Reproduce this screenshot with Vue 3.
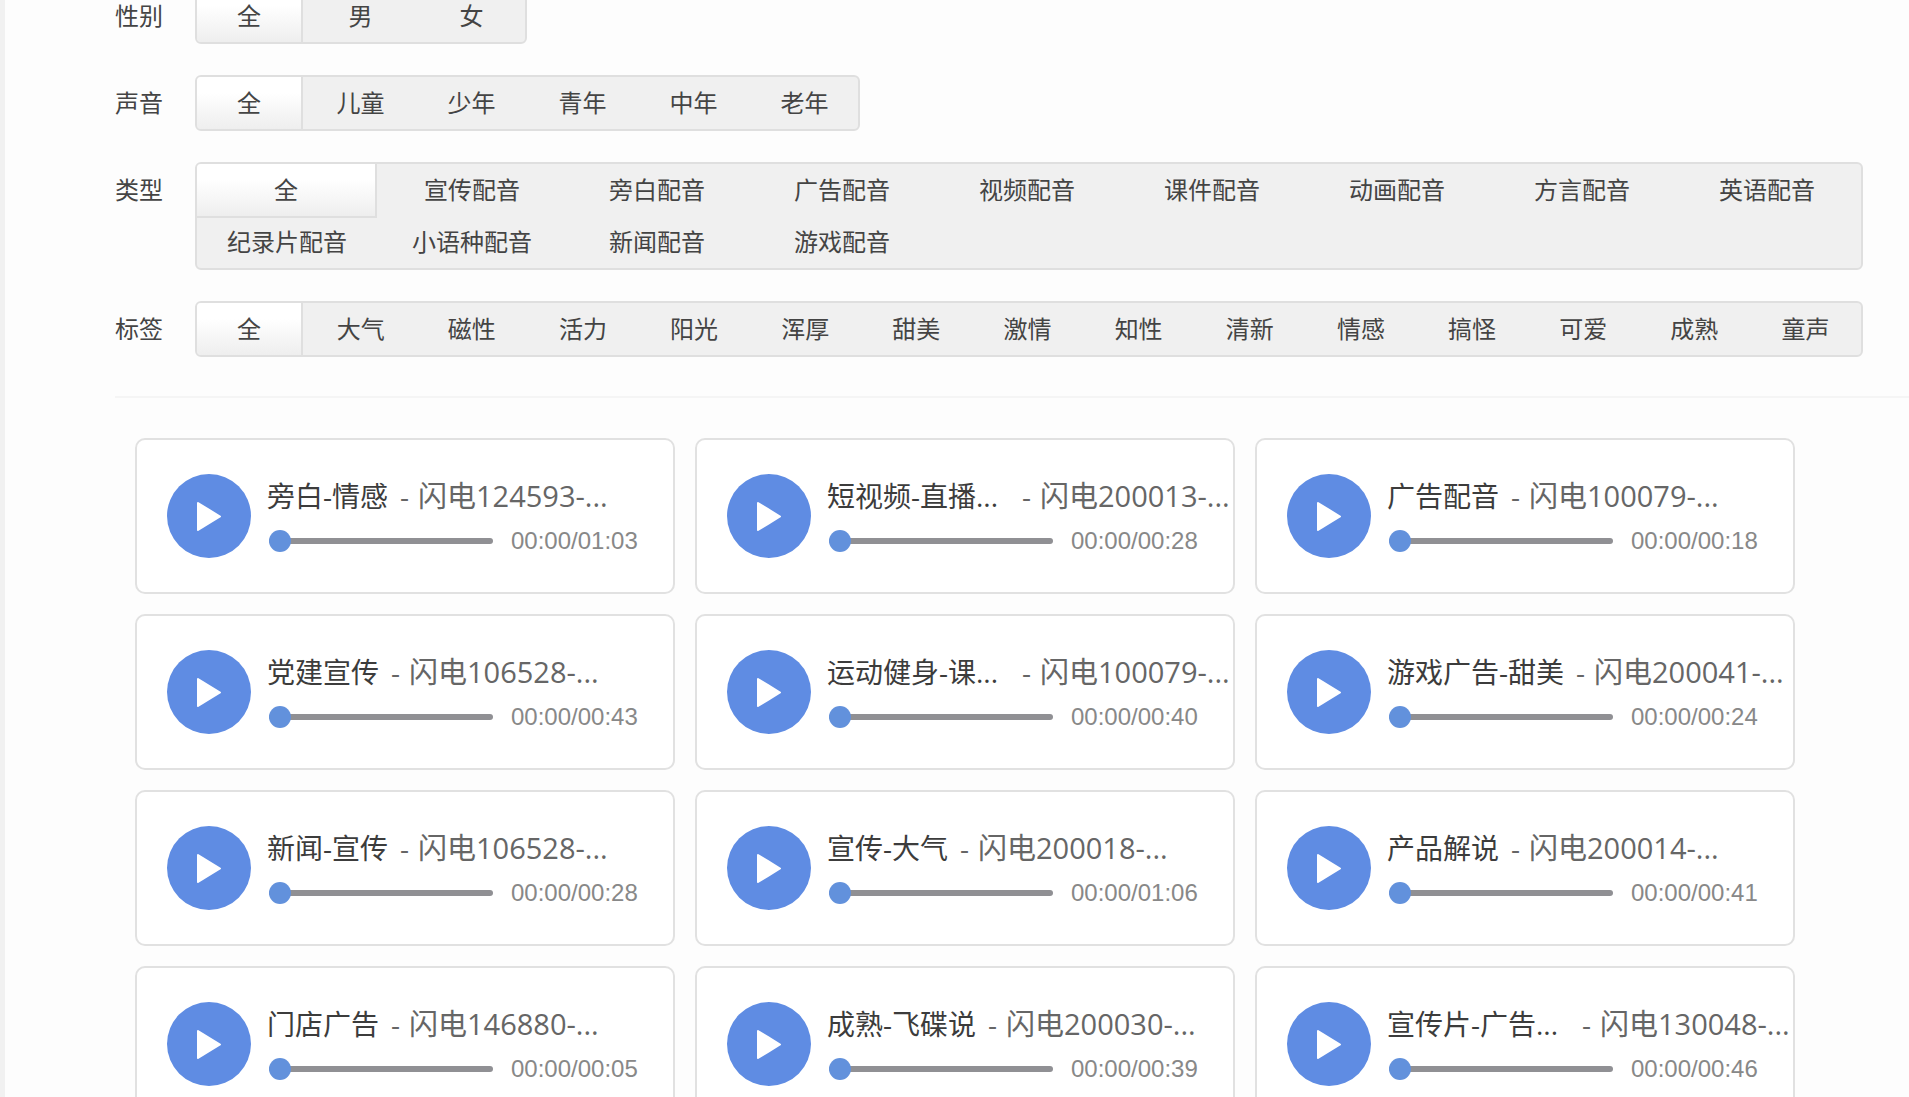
<script setup>
import { ref } from 'vue'

const filters = ref([
  { label: '性别', active: 0, options: ['全', '男', '女'] },
  { label: '声音', active: 0, options: ['全', '儿童', '少年', '青年', '中年', '老年'] },
  {
    label: '类型',
    active: 0,
    layout: 'wide',
    options: [
      '全', '宣传配音', '旁白配音', '广告配音', '视频配音', '课件配音', '动画配音',
      '方言配音', '英语配音', '纪录片配音', '小语种配音', '新闻配音', '游戏配音',
    ],
  },
  {
    label: '标签',
    active: 0,
    layout: 'full',
    options: [
      '全', '大气', '磁性', '活力', '阳光', '浑厚', '甜美', '激情',
      '知性', '清新', '情感', '搞怪', '可爱', '成熟', '童声',
    ],
  },
])

const samples = [
  { title: '旁白-情感', voice: '闪电124593-...', length: '01:03' },
  { title: '短视频-直播...', voice: '闪电200013-...', length: '00:28', clipped: true },
  { title: '广告配音', voice: '闪电100079-...', length: '00:18' },
  { title: '党建宣传', voice: '闪电106528-...', length: '00:43' },
  { title: '运动健身-课...', voice: '闪电100079-...', length: '00:40', clipped: true },
  { title: '游戏广告-甜美', voice: '闪电200041-...', length: '00:24' },
  { title: '新闻-宣传', voice: '闪电106528-...', length: '00:28' },
  { title: '宣传-大气', voice: '闪电200018-...', length: '01:06' },
  { title: '产品解说', voice: '闪电200014-...', length: '00:41' },
  { title: '门店广告', voice: '闪电146880-...', length: '00:05' },
  { title: '成熟-飞碟说', voice: '闪电200030-...', length: '00:39' },
  { title: '宣传片-广告...', voice: '闪电130048-...', length: '00:46', clipped: true },
]
</script>

<template>
  <main class="page">
    <section class="filters">
      <div v-for="(group, g) in filters" :key="group.label" class="filter">
        <span :id="'filter-' + g" class="filter-label">{{ group.label }}</span>
        <div class="options" :class="group.layout" role="group" :aria-labelledby="'filter-' + g">
          <button
            v-for="(option, i) in group.options"
            :key="option"
            type="button"
            class="option"
            :class="{ selected: group.active === i }"
            :aria-pressed="group.active === i"
            @click="group.active = i"
          >{{ option }}</button>
        </div>
      </div>
    </section>

    <section class="samples">
      <article v-for="(s, i) in samples" :key="i" class="card">
        <button type="button" class="play" :aria-label="'播放 ' + s.title">
          <svg viewBox="0 0 84 84" width="84" height="84" aria-hidden="true">
            <path d="M31 29 L53 42.500 L31 56 Z" fill="#fff" stroke="#fff" stroke-width="2" stroke-linejoin="round" />
          </svg>
        </button>
        <div class="info">
          <div class="heading">
            <span class="title" :class="{ clipped: s.clipped }">{{ s.title }}</span>
            <span class="dash">-</span>
            <span class="voice">{{ s.voice }}</span>
          </div>
          <div class="progress">
            <input class="seek" type="range" min="0" max="100" value="0" :aria-label="'进度 ' + s.title" />
            <span class="time">00:00/{{ s.length }}</span>
          </div>
        </div>
      </article>
    </section>
  </main>
</template>

<style>
body {
  background: #fdfdfd;
}
</style>

<style scoped>
.page {
  display: flex;
  flex-direction: column;
  height: 100vh;
  overflow-x: hidden;
  overflow-y: auto;
  scrollbar-width: none;
  box-sizing: border-box;
  padding-left: 110px;
  border-left: 5px solid #f1f1f1;
  background: #fdfdfd;
  color: #444;
  font-family: "Open Sans", "Noto Sans CJK SC", sans-serif;
}

.filters {
  display: flex;
  flex-direction: column;
  gap: 31px;
  flex: none;
  margin-top: -12px;
  padding-bottom: 39px;
  border-bottom: 2px solid #f5f5f5;
}

.filter {
  display: flex;
  align-items: flex-start;
  gap: 32px;
  padding-right: 46px;
  font-size: 24px;
}

.filter-label {
  flex: none;
  line-height: 56px;
}

.options {
  display: flex;
  flex-wrap: wrap;
  column-gap: 4px;
  border: 2px solid #dfdfdf;
  border-radius: 6px;
  background: #f0f0f0;
}

.option {
  box-sizing: border-box;
  width: 107px;
  height: 52px;
  padding: 0;
  border: 0;
  background: none;
  color: inherit;
  font: inherit;
  line-height: 52px;
  text-align: center;
  white-space: nowrap;
  cursor: pointer;
}

.option.selected {
  width: 106px;
  border-right: 2px solid #dfdfdf;
  border-radius: 4px 0 0 4px;
  background: linear-gradient(#fff 30%, #eee);
}

.options.full {
  flex: 1;
  justify-content: space-between;
  column-gap: 2px;
  padding-right: 2px;
}

.options.wide {
  flex: 1;
  display: grid;
  grid-template-columns: repeat(auto-fill, 180px);
  column-gap: 5px;
}

.wide .option {
  width: 180px;
}

.wide .option.selected {
  height: 54px;
  margin-bottom: -2px;
  border-bottom: 2px solid #dfdfdf;
  border-radius: 4px 0 0 0;
}

.samples {
  display: grid;
  grid-template-columns: repeat(3, minmax(0, 1fr));
  gap: 20px;
  flex: none;
  padding: 40px 114px 20px 20px;
}

.card {
  display: flex;
  align-items: center;
  gap: 16px;
  box-sizing: border-box;
  height: 156px;
  padding-left: 30px;
  border: 2px solid #e1e1e1;
  border-radius: 10px;
  background: #fff;
}

.play {
  flex: none;
  width: 84px;
  height: 84px;
  padding: 0;
  border: 0;
  border-radius: 50%;
  background: #5f8ce3;
  cursor: pointer;
}

.play svg {
  display: block;
}

.info {
  display: flex;
  flex-direction: column;
  gap: 13px;
  padding-bottom: 3px;
}

.heading {
  display: flex;
  font-size: 28px;
  line-height: 40px;
  white-space: nowrap;
}

.title {
  color: #3c3c3c;
}

.title.clipped {
  width: 183px;
}

.dash {
  margin: 0 9px 0 12px;
  color: #666;
}

.voice {
  color: #666;
  font-size: 29px;
}

.progress {
  display: flex;
  align-items: center;
  gap: 18px;
  padding-left: 2px;
}

.seek {
  appearance: none;
  width: 224px;
  height: 22px;
  margin: 0;
  background: none;
  cursor: pointer;
}

.seek::-webkit-slider-runnable-track {
  height: 6px;
  border-radius: 3px;
  background: #909094;
}

.seek::-webkit-slider-thumb {
  appearance: none;
  width: 22px;
  height: 22px;
  margin-top: -8px;
  border-radius: 50%;
  background: #6291dc;
}

.time {
  color: #888;
  font-family: "Liberation Sans", Arial, sans-serif;
  font-size: 24px;
  line-height: 24px;
}
</style>
